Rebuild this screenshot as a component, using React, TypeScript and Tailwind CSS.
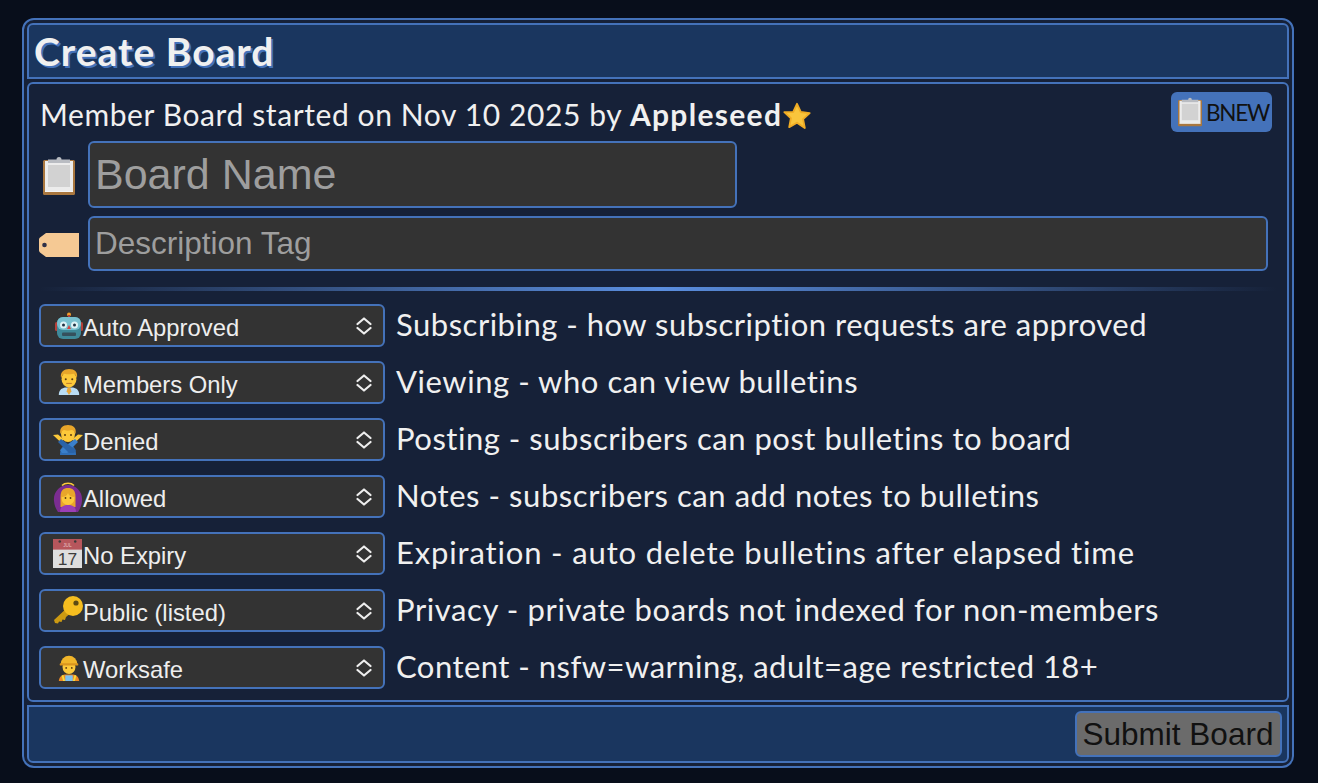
import { ReactNode } from 'react';

const Clipboard = ({ className }: { className: string }) => (
  <svg viewBox="0 0 34 40" className={className}>
    <rect x="1" y="4" width="32" height="35" rx="1.5" fill="#a9773f" />
    <rect x="3" y="5" width="28" height="30" fill="#ececec" />
    <rect x="6" y="9" width="22" height="22" fill="#d2d2d2" />
    <rect x="3" y="35" width="28" height="1" fill="#f5f5f5" />
    <path d="M6 3.500h8.500a2.500 2.500 0 0 1 5 0H28v3.500H6z" fill="#b9bcc2" />
  </svg>
);

const Tag = ({ className }: { className: string }) => (
  <svg viewBox="0 0 40 26" className={className}>
    <path d="M7 1h33v24H7L1 20.500a3 3 0 0 1-1-2.500V8a3 3 0 0 1 1-2.500z" fill="#f5c994" />
    <circle cx="5.500" cy="13" r="2.300" fill="#2e3048" />
  </svg>
);

const Star = () => (
  <svg viewBox="0 0 32 32" className="inline-block w-[30px] h-[30px] align-[-5px]">
    <path d="M16 3l4 8.700 9.500 1.200-7 6.500 1.800 9.400L16 23.200l-8.300 4.600 1.800-9.400-7-6.500L12 11.700z" fill="#f9c53c" stroke="#f0ac24" strokeWidth="2" strokeLinejoin="round" />
  </svg>
);

const Robot = () => (
  <svg viewBox="0 0 28 28">
    <circle cx="14" cy="2.500" r="2" fill="#f59e2c" />
    <rect x="13" y="3" width="2" height="3" fill="#b5413b" />
    <rect x="0" y="10" width="3" height="9" rx="1.500" fill="#b5413b" />
    <rect x="25" y="10" width="3" height="9" rx="1.500" fill="#b5413b" />
    <rect x="2" y="5" width="24" height="22" rx="6" fill="#3f8a9a" />
    <rect x="2" y="5" width="24" height="13" rx="6" fill="#78c0cf" />
    <circle cx="8.500" cy="13" r="3.500" fill="#dff3f6" />
    <circle cx="19.500" cy="13" r="3.500" fill="#dff3f6" />
    <circle cx="8.500" cy="13" r="1.500" fill="#234" />
    <circle cx="19.500" cy="13" r="1.500" fill="#234" />
    <path d="M14 13l2 4h-4z" fill="#d8433f" />
    <rect x="7" y="20.500" width="14" height="3.500" rx="1" fill="#35505c" />
  </svg>
);

const Man = () => (
  <svg viewBox="0 0 28 28">
    <path d="M3 28c0-6 4-8 8-8h6c4 0 8 2 8 8z" fill="#b9dcf4" />
    <path d="M12.500 20h3l1 4-2.500 4-2.500-4z" fill="#e8a63a" />
    <ellipse cx="14" cy="11" rx="8" ry="9" fill="#fdc93a" />
    <path d="M5.500 10C4 3 9 0 14 0c6 0 10 3 8.500 10-1-3-2-5-4-5-3 1-7 1-9 0-2 0-3 2-4 5z" fill="#e8a62a" />
    <circle cx="10.500" cy="11" r="1.100" fill="#5a3b10" />
    <circle cx="17.500" cy="11" r="1.100" fill="#5a3b10" />
    <path d="M11 15.500h6" stroke="#b8742a" strokeWidth="1" />
  </svg>
);

const NoGesture = () => (
  <svg viewBox="0 0 30 30">
    <path d="M7 30c0-6 2-10 8-10s8 4 8 10z" fill="#2f6fb8" />
    <ellipse cx="15" cy="9" rx="7" ry="8" fill="#fdc93a" />
    <path d="M7.500 9C6 3 10 0 15 0s9 3 7.500 9c-1-2-2-4-4-4-3 1-5 1-7 0-2 0-3 2-4 4z" fill="#e8a62a" />
    <circle cx="12" cy="10" r="1" fill="#5a3b10" />
    <circle cx="18" cy="10" r="1" fill="#5a3b10" />
    <path d="M0 10l5-.5 6 5-3 3z" fill="#fdc93a" />
    <path d="M30 10l-5-.5-6 5 3 3z" fill="#fdc93a" />
    <path d="M22 14l3 3-11 11h-5l-2-3z" fill="#3a80cc" />
    <path d="M8 14l-3 3 11 11h5l2-3z" fill="#2a63a8" />
  </svg>
);

const OkGesture = () => (
  <svg viewBox="0 0 30 30">
    <path d="M15 3C7 3 0 10 1 19c.500 5 2 8 4 11h20c2-3 3.500-6 4-11 1-9-6-16-14-16z" fill="#7b2d91" />
    <path d="M9 3.500c3-3 9-3 12 0" stroke="#fdc93a" strokeWidth="1.600" fill="none" />
    <path d="M7.500 15c0-7 3-9 7.500-9s7.500 2 7.500 9v10h-15z" fill="#e8a62a" />
    <ellipse cx="15" cy="16" rx="6.500" ry="7" fill="#fdc93a" />
    <path d="M8.500 15c2.500 0 5.500-1 6.500-4 1 3 4 4 6.500 4-1-5-3-6.500-6.500-6.500s-5.500 1.500-6.500 6.500z" fill="#e8a62a" />
    <circle cx="12.500" cy="16" r="0.900" fill="#5a3b10" />
    <circle cx="17.500" cy="16" r="0.900" fill="#5a3b10" />
    <path d="M7 30c0-5 3-7 8-7s8 2 8 7z" fill="#9c3fb5" />
  </svg>
);

const Calendar = () => (
  <svg viewBox="0 0 30 30">
    <rect x="0" y="0" width="30" height="30" fill="#dedede" />
    <rect x="0" y="0" width="30" height="11" fill="#b7565c" />
    <circle cx="7" cy="2.500" r="1.300" fill="#3a3a3a" />
    <circle cx="23" cy="2.500" r="1.300" fill="#3a3a3a" />
    <text x="15" y="8.500" textAnchor="middle" fontFamily="Liberation Sans, sans-serif" fontSize="5" fill="#e8c4c4">JUL</text>
    <text x="15" y="27" textAnchor="middle" fontFamily="Liberation Sans, sans-serif" fontSize="18" fill="#3d3d3d">17</text>
  </svg>
);

const Key = () => (
  <svg viewBox="0 0 30 30">
    <path d="M15 11L1 24l1 3 3 .5 1-2 2.500.5 1-2.500 2.500.5 1-3 6-5z" fill="#cc9a12" />
    <circle cx="20" cy="10" r="10" fill="#f5bd1f" />
    <circle cx="23" cy="7" r="2.600" fill="#5c4a14" />
  </svg>
);

const Worker = () => (
  <svg viewBox="0 0 28 30">
    <path d="M3 30c0-6 4-8 8-8h6c4 0 8 2 8 8z" fill="#f08a24" />
    <rect x="10" y="23" width="8" height="7" fill="#7cc0ee" />
    <path d="M7 23l2 7M21 23l-2 7" stroke="#f5dd3c" strokeWidth="2" />
    <ellipse cx="14" cy="14" rx="7" ry="7.500" fill="#fdc93a" />
    <circle cx="11" cy="15" r="1" fill="#5a3b10" />
    <circle cx="17" cy="15" r="1" fill="#5a3b10" />
    <path d="M5 11a9 9 0 0 1 18 0z" fill="#f0b52a" />
    <rect x="4" y="10" width="20" height="2.500" rx="1" fill="#d9941e" />
  </svg>
);

const UpDown = () => (
  <svg viewBox="0 0 16 18" className="w-[16px] h-[18px] shrink-0" fill="none" stroke="#eeeeee" strokeWidth="2.200" strokeLinecap="round" strokeLinejoin="round">
    <path d="M1.500 7L8 1.500 14.500 7" />
    <path d="M1.500 11L8 16.500 14.500 11" />
  </svg>
);

type Row = { icon: ReactNode; iconClass: string; value: string; help: string; helpClass: string };

const rows: Row[] = [
  { icon: <Robot />, iconClass: 'w-[28px] h-[28px] ml-[3px]', value: 'Auto Approved', help: 'Subscribing - how subscription requests are approved', helpClass: 'tracking-[0.5px]' },
  { icon: <Man />, iconClass: 'w-[26px] h-[28px] ml-[4px] mr-[1px]', value: 'Members Only', help: 'Viewing - who can view bulletins', helpClass: 'tracking-[0.55px]' },
  { icon: <NoGesture />, iconClass: 'w-[30px] h-[30px] ml-[1px]', value: 'Denied', help: 'Posting - subscribers can post bulletins to board', helpClass: 'tracking-[0.52px]' },
  { icon: <OkGesture />, iconClass: 'w-[30px] h-[30px] ml-[1px]', value: 'Allowed', help: 'Notes - subscribers can add notes to bulletins', helpClass: 'tracking-[0.55px]' },
  { icon: <Calendar />, iconClass: 'w-[29px] h-[29px] ml-[1px] mr-[1px]', value: 'No Expiry', help: 'Expiration - auto delete bulletins after elapsed time', helpClass: 'tracking-[0.85px]' },
  { icon: <Key />, iconClass: 'w-[30px] h-[30px] ml-[1px]', value: 'Public (listed)', help: 'Privacy - private boards not indexed for non-members', helpClass: 'tracking-[0.6px]' },
  { icon: <Worker />, iconClass: 'w-[26px] h-[28px] ml-[4px] mr-[1px]', value: 'Worksafe', help: 'Content - nsfw=warning, adult=age restricted 18+', helpClass: 'tracking-[0.47px]' },
];

export default function App() {
  return (
    <div className="h-[783px] bg-[#080e1b] pl-[22px] pr-[24px] pt-[18px] overflow-hidden font-['Lato',sans-serif] text-[#f0f0f0]">
      <div className="h-[750px] bg-[#162138] border-2 border-[#4472ba] rounded-[12px] p-[3px] flex flex-col">
        {/* Header */}
        <div className="h-[56px] shrink-0 bg-[#1a365f] border-2 border-[#4472ba] rounded-t-[6px] pl-[5px] flex items-center">
          <h1 className="text-[39px] font-bold tracking-[1px] text-[#f0f0f0] [text-shadow:2px_2px_0_#4472ba]">Create Board</h1>
        </div>

        {/* Form */}
        <div className="h-[620px] mt-[3px] shrink-0 bg-[#162138] border-2 border-[#4472ba] rounded-[6px] px-[10px] relative">
          <div className="h-[57px] pl-[1px] pt-[10px] text-[30px] leading-[40px] tracking-[0.6px]">
            Member Board started on Nov 10 2025 by <b className="tracking-[1.300px]">Appleseed</b>
            <Star />
          </div>
          <button className="absolute right-[15px] top-[8px] w-[101px] h-[40px] bg-[#4472ba] rounded-[6px] flex items-center pl-[6px] text-[22.500px] tracking-[-1.200px] text-[#111]">
            <Clipboard className="w-[26px] h-[30px] mr-[3px] shrink-0" />
            <span className="pt-[2px]">BNEW</span>
          </button>

          <div className="flex items-center gap-[9px] h-[67px] mb-[8px]">
            <Clipboard className="w-[40px] h-[40px] shrink-0 mt-[3px]" />
            <div className="w-[649px] h-[67px] bg-[#333] border-2 border-[#4472ba] rounded-[6px] pl-[5px] flex items-center font-['Liberation_Sans',sans-serif] text-[43px] text-[#9e9e9e]">
              Board Name
            </div>
          </div>
          <div className="flex items-center gap-[9px] h-[55px]">
            <Tag className="w-[40px] h-[26px] shrink-0 mt-[2px]" />
            <div className="w-[1180px] h-[55px] bg-[#333] border-2 border-[#4472ba] rounded-[6px] pl-[5px] flex items-center font-['Liberation_Sans',sans-serif] text-[31.500px] text-[#9e9e9e]">
              Description Tag
            </div>
          </div>

          <div className="h-[4px] mt-[16px] mb-[13px] bg-gradient-to-r from-transparent via-[#5b8fe0] to-transparent" />

          <div className="flex flex-col gap-[14px]">
            {rows.map((row) => (
              <div key={row.value} className="flex items-center gap-[11px] h-[43px]">
                <div className="w-[346px] h-[43px] shrink-0 bg-[#333] border-2 border-[#4472ba] rounded-[6px] pl-[11px] pr-[11px] flex items-center font-['Liberation_Sans',sans-serif] text-[23.800px] text-[#eee]">
                  <span className={`${row.iconClass} shrink-0`}>{row.icon}</span>
                  <span className="flex-1 pt-[5px]">{row.value}</span>
                  <UpDown />
                </div>
                <span className={`text-[31px] leading-[36px] -mt-[3px] ${row.helpClass}`}>{row.help}</span>
              </div>
            ))}
          </div>
        </div>

        {/* Footer */}
        <div className="flex-1 mt-[3px] bg-[#1a365f] border-2 border-[#4472ba] rounded-b-[6px] flex items-center justify-end pr-[5px]">
          <button className="w-[207px] h-[46px] bg-[#6b6b6b] border-2 border-[#4472ba] rounded-[6px] pr-[1px] pt-[2px] leading-none font-['Liberation_Sans',sans-serif] text-[31.500px] text-[#111]">
            Submit Board
          </button>
        </div>
      </div>
    </div>
  );
}
